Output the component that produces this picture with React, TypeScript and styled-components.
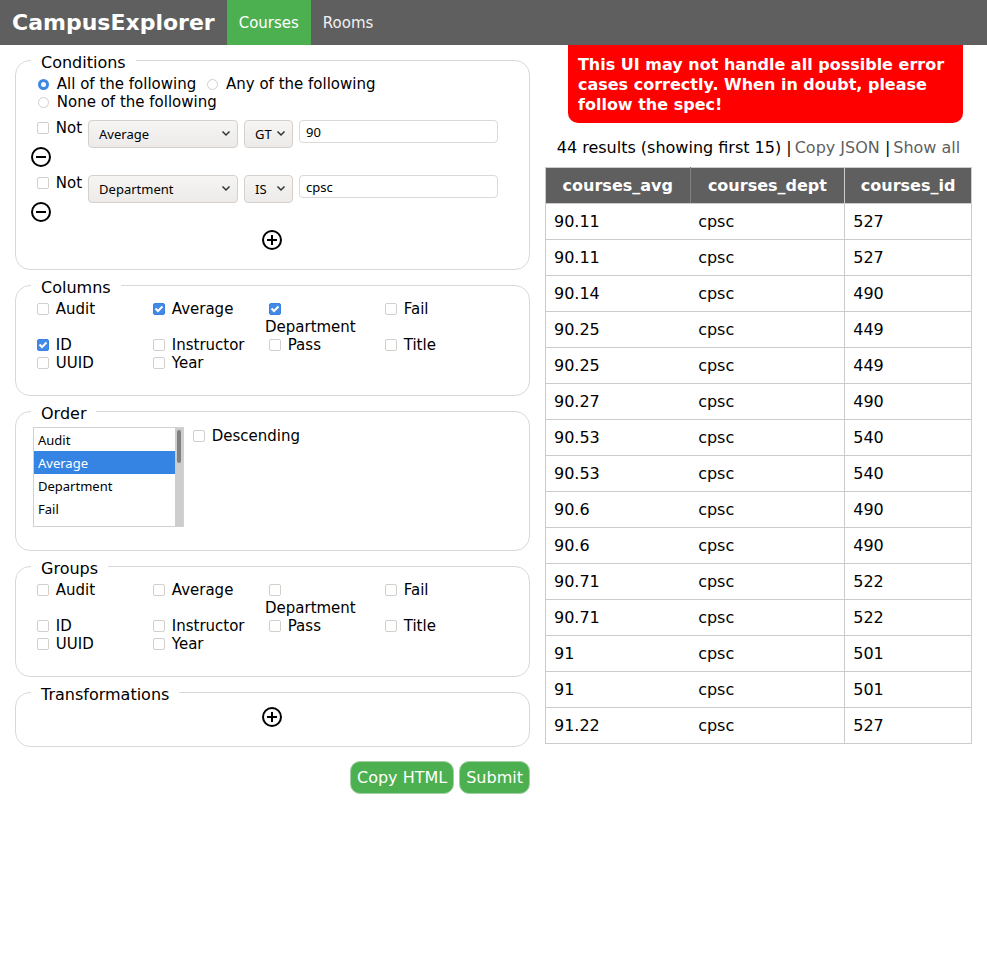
import React, { useState } from "react";
import styled, { createGlobalStyle, css } from "styled-components";

const GlobalStyle = createGlobalStyle`
  * { box-sizing: border-box; }
  body {
    margin: 0;
    background: #fff;
    color: #000;
    font-family: "DejaVu Sans", Verdana, sans-serif;
    font-size: 16px;
    line-height: 20px;
  }
`;

const NavBar = styled.nav`
  display: flex;
  align-items: stretch;
  height: 45px;
  background: #5f5f5f;
  color: #fff;
`;

const Brand = styled.h1`
  display: flex;
  align-items: center;
  margin: 0;
  padding: 0 12px;
  font-size: 22px;
  font-weight: bold;
`;

const NavTab = styled.a<{ $active?: boolean }>`
  display: flex;
  align-items: center;
  padding: 0 12px;
  font-size: 15px;
  color: ${(p) => (p.$active ? "#fff" : "#f1f1f1")};
  background: ${(p) => (p.$active ? "#4caf50" : "transparent")};
  text-decoration: none;
`;

const Layout = styled.main`
  display: grid;
  grid-template-columns: minmax(0, 41fr) minmax(0, 34fr);
  column-gap: 15px;
  align-items: start;
  padding: 0 15px;
`;

const QueryForm = styled.form`
  display: flex;
  flex-direction: column;
  gap: 6px;
  padding-top: 6px;
`;

const Group = styled.fieldset<{ $bottom: number }>`
  min-width: 0;
  margin: 0;
  padding: 5px 15px ${(p) => p.$bottom}px;
  border: 1px solid #d8d8d8;
  border-radius: 15px;
`;

const Legend = styled.legend`
  padding: 4px 10px 0;
  line-height: 15px;
`;

const controlLabel = css`
  font-size: 15px;
  line-height: 18px;
`;

const Toggle = styled.input`
  appearance: none;
  border: 1px solid #d3cfcb;
  background: #fff center / 10px 10px no-repeat;
  vertical-align: -1px;
`;

const CheckBox = styled(Toggle).attrs({ type: "checkbox" })`
  width: 12px;
  height: 12px;
  margin: 0 2px 0 4px;
  border-radius: 2px;
  &:checked {
    border-color: #3584e4;
    background-color: #4389e6;
    background-image: url("data:image/svg+xml,%3Csvg xmlns='http://www.w3.org/2000/svg' viewBox='0 0 10 10'%3E%3Cpath d='M1.5 4.5l2.5 2.5 4.5-4.5' fill='none' stroke='white' stroke-width='2'/%3E%3C/svg%3E");
  }
`;

const RadioButton = styled(Toggle).attrs({ type: "radio" })`
  width: 11px;
  height: 11px;
  margin: 0 3px 0 5px;
  border-radius: 50%;
  &:checked {
    border: 3px solid #3d87e5;
  }
`;

const ModeList = styled.div`
  ${controlLabel}
  padding: 0 0 9px 2px;
`;

const ModeLabel = styled.label`
  display: inline-block;
  margin-right: 6px;
`;

const ConditionItem = styled.div`
  margin-bottom: 8px;
`;

const ConditionControls = styled.div`
  display: flex;
  align-items: flex-start;
  gap: 6px;
  height: 27px;
  padding: 0 16px 0 2px;
`;

const NotLabel = styled.label`
  flex: none;
  font-size: 15px;
  line-height: 16px;
  white-space: nowrap;
`;

const SelectBox = styled.span<{ $width: number }>`
  display: grid;
  flex: none;
  width: ${(p) => p.$width}px;
  align-items: center;

  & > * {
    grid-area: 1 / 1;
  }

  svg {
    justify-self: end;
    margin-right: 6px;
    pointer-events: none;
  }
`;

const fieldFont = css`
  font-family: "Noto Sans", sans-serif;
  font-size: 13px;
  color: #000;
`;

const DropDown = styled.select`
  ${fieldFont}
  appearance: none;
  width: 100%;
  height: 28px;
  padding: 0 10px;
  border: 1px solid #d5d0cc;
  border-radius: 4px;
  background: linear-gradient(#f6f5f4, #edebe9);
`;

const TextField = styled.input`
  ${fieldFont}
  flex: 1;
  min-width: 0;
  height: 23px;
  padding: 0 6px;
  border: 1px solid #dcd9d6;
  border-radius: 4px;
  background: #fff;
`;

const IconButton = styled.button<{ $centered?: boolean }>`
  display: block;
  width: 20px;
  height: 20px;
  margin: ${(p) => (p.$centered ? "0 auto" : "0")};
  padding: 0;
  border: 0;
  background: none;
  color: #000;
  cursor: pointer;

  svg {
    display: block;
  }
`;

const OptionGrid = styled.div`
  display: grid;
  grid-template-columns: repeat(4, minmax(0, 1fr));
  padding: 0 17px 0 2px;
`;

const OptionLabel = styled.label`
  ${controlLabel}
  padding-right: 4px;
`;

const OrderRow = styled.div`
  display: flex;
  align-items: flex-start;
  gap: 5px;
  padding: 1px 0 0 2px;
`;

const ListFrame = styled.div`
  display: flex;
  width: 151px;
  height: 100px;
  border: 1px solid #d5d0cc;
  background: #fff;
`;

const ListBox = styled.select`
  ${fieldFont}
  flex: 1;
  min-width: 0;
  height: 98px;
  padding: 0;
  border: 0;
  border-radius: 0;
  background: #fff;
  outline: none;
  scrollbar-width: none;

  option {
    height: 23px;
    padding: 3px 4px 1px;
    line-height: 19px;
  }
  option:checked {
    background: #3584e4 linear-gradient(#3584e4, #3584e4);
    color: #fff;
  }
`;

const ScrollTrack = styled.div`
  width: 8px;
  padding: 2px;
  background: #cdcdcd;
`;

const ScrollThumb = styled.div`
  height: 33px;
  border-radius: 2px;
  background: #7f8081;
`;

const FormActions = styled.div`
  display: flex;
  justify-content: flex-end;
  gap: 5px;
  margin-top: 8px;
`;

const ActionButton = styled.button`
  height: 33px;
  padding: 0 6px;
  border: 1px solid #a5cfa7;
  border-radius: 10px;
  background: #4caf50;
  color: #fff;
  font: inherit;
  cursor: pointer;
`;

const Warning = styled.div`
  margin: 0 9px 0 23px;
  padding: 10px 10px 8px;
  border-radius: 0 0 10px 10px;
  background: #f00;
  color: #fff;
  font-weight: bold;
`;

const ResultStatus = styled.p`
  margin: 15px 0 9px;
  text-align: center;
`;

const StatusLink = styled.a`
  margin-left: 3px;
  color: #5f5f5f;
  text-decoration: none;
`;

const ResultTable = styled.table`
  width: 100%;
  border-collapse: collapse;
  border: 1px solid #ccc;
`;

const HeadCell = styled.th`
  height: 36px;
  padding: 0 8px;
  border: 1px solid #ccc;
  background: #5f5f5f;
  color: #fff;

  &:first-child {
    border-right-color: #808080;
  }
  &:nth-child(2) {
    border-left-color: #808080;
  }
`;

const Cell = styled.td`
  height: 36px;
  padding: 0 8px;
  border-bottom: 1px solid #ccc;

  &:last-child {
    border-left: 1px solid #ccc;
  }
`;

const ChevronIcon = () => (
  <svg width="12" height="12" viewBox="0 0 12 12" aria-hidden="true">
    <path d="M2.5 3.5L6 7l3.5-3.5" fill="none" stroke="#2e3436" strokeWidth="1.5" />
  </svg>
);

const CircleIcon = ({ plus }: { plus?: boolean }) => (
  <svg width="20" height="20" viewBox="0 0 20 20" aria-hidden="true">
    <circle cx="10" cy="10" r="9" fill="none" stroke="currentColor" strokeWidth="2" />
    <path d={plus ? "M5 10h10M10 5v10" : "M5 10h10"} stroke="currentColor" strokeWidth="2" />
  </svg>
);

const FIELDS = ["Audit", "Average", "Department", "Fail", "ID", "Instructor", "Pass", "Title", "UUID", "Year"];
const MODES = ["All", "Any", "None"];

const CONDITIONS = [
  { field: "Average", operator: "GT", value: "90" },
  { field: "Department", operator: "IS", value: "cpsc" },
];

const RESULTS: [string, string, string][] = [
  ["90.11", "cpsc", "527"],
  ["90.11", "cpsc", "527"],
  ["90.14", "cpsc", "490"],
  ["90.25", "cpsc", "449"],
  ["90.25", "cpsc", "449"],
  ["90.27", "cpsc", "490"],
  ["90.53", "cpsc", "540"],
  ["90.53", "cpsc", "540"],
  ["90.6", "cpsc", "490"],
  ["90.6", "cpsc", "490"],
  ["90.71", "cpsc", "522"],
  ["90.71", "cpsc", "522"],
  ["91", "cpsc", "501"],
  ["91", "cpsc", "501"],
  ["91.22", "cpsc", "527"],
];

const FieldOptions = ({ name, selected = [] }: { name: string; selected?: string[] }) => (
  <OptionGrid>
    {FIELDS.map((field) => (
      <OptionLabel key={field}>
        <CheckBox name={name} value={field} defaultChecked={selected.includes(field)} /> {field}
      </OptionLabel>
    ))}
  </OptionGrid>
);

const Condition = ({ field, operator, value }: { field: string; operator: string; value: string }) => (
  <ConditionItem>
    <ConditionControls>
      <NotLabel>
        <CheckBox /> Not
      </NotLabel>
      <SelectBox $width={150}>
        <DropDown defaultValue={field} aria-label="Field">
          {FIELDS.map((f) => (
            <option key={f}>{f}</option>
          ))}
        </DropDown>
        <ChevronIcon />
      </SelectBox>
      <SelectBox $width={49}>
        <DropDown defaultValue={operator} aria-label="Operator">
          {["EQ", "GT", "IS", "LT"].map((op) => (
            <option key={op}>{op}</option>
          ))}
        </DropDown>
        <ChevronIcon />
      </SelectBox>
      <TextField type="text" defaultValue={value} aria-label="Value" />
    </ConditionControls>
    <IconButton type="button" aria-label="Remove condition">
      <CircleIcon />
    </IconButton>
  </ConditionItem>
);

export default function App() {
  const [order, setOrder] = useState<string[]>(["Average"]);

  return (
    <>
      <GlobalStyle />
      <NavBar>
        <Brand>CampusExplorer</Brand>
        <NavTab href="#courses" $active>
          Courses
        </NavTab>
        <NavTab href="#rooms">Rooms</NavTab>
      </NavBar>
      <Layout>
        <QueryForm onSubmit={(e) => e.preventDefault()}>
          <Group $bottom={19}>
            <Legend>Conditions</Legend>
            <ModeList>
              {MODES.map((mode) => (
                <ModeLabel key={mode}>
                  <RadioButton name="mode" value={mode} defaultChecked={mode === "All"} /> {mode} of the following
                </ModeLabel>
              ))}
            </ModeList>
            {CONDITIONS.map((c) => (
              <Condition key={c.field} {...c} />
            ))}
            <IconButton type="button" $centered aria-label="Add condition">
              <CircleIcon plus />
            </IconButton>
          </Group>
          <Group $bottom={23}>
            <Legend>Columns</Legend>
            <FieldOptions name="columns" selected={["Average", "Department", "ID"]} />
          </Group>
          <Group $bottom={23}>
            <Legend>Order</Legend>
            <OrderRow>
              <ListFrame>
                <ListBox
                  multiple
                  aria-label="Order fields"
                  value={order}
                  onChange={(e) => setOrder(Array.from(e.target.selectedOptions, (o) => o.value))}
                >
                  {FIELDS.map((f) => (
                    <option key={f}>{f}</option>
                  ))}
                </ListBox>
                <ScrollTrack aria-hidden="true">
                  <ScrollThumb />
                </ScrollTrack>
              </ListFrame>
              <OptionLabel>
                <CheckBox /> Descending
              </OptionLabel>
            </OrderRow>
          </Group>
          <Group $bottom={23}>
            <Legend>Groups</Legend>
            <FieldOptions name="groups" />
          </Group>
          <Group $bottom={19}>
            <Legend>Transformations</Legend>
            <IconButton type="button" $centered aria-label="Add transformation">
              <CircleIcon plus />
            </IconButton>
          </Group>
          <FormActions>
            <ActionButton type="button">Copy HTML</ActionButton>
            <ActionButton type="submit">Submit</ActionButton>
          </FormActions>
        </QueryForm>
        <section>
          <Warning role="alert">
            This UI may not handle all possible error cases correctly. When in doubt, please follow the spec!
          </Warning>
          <ResultStatus>
            44 results (showing first 15) |<StatusLink href="#copy">Copy JSON</StatusLink> |
            <StatusLink href="#all">Show all</StatusLink>
          </ResultStatus>
          <ResultTable>
            <thead>
              <tr>
                <HeadCell>courses_avg</HeadCell>
                <HeadCell>courses_dept</HeadCell>
                <HeadCell>courses_id</HeadCell>
              </tr>
            </thead>
            <tbody>
              {RESULTS.map((row, i) => (
                <tr key={i}>
                  {row.map((value, j) => (
                    <Cell key={j}>{value}</Cell>
                  ))}
                </tr>
              ))}
            </tbody>
          </ResultTable>
        </section>
      </Layout>
    </>
  );
}
